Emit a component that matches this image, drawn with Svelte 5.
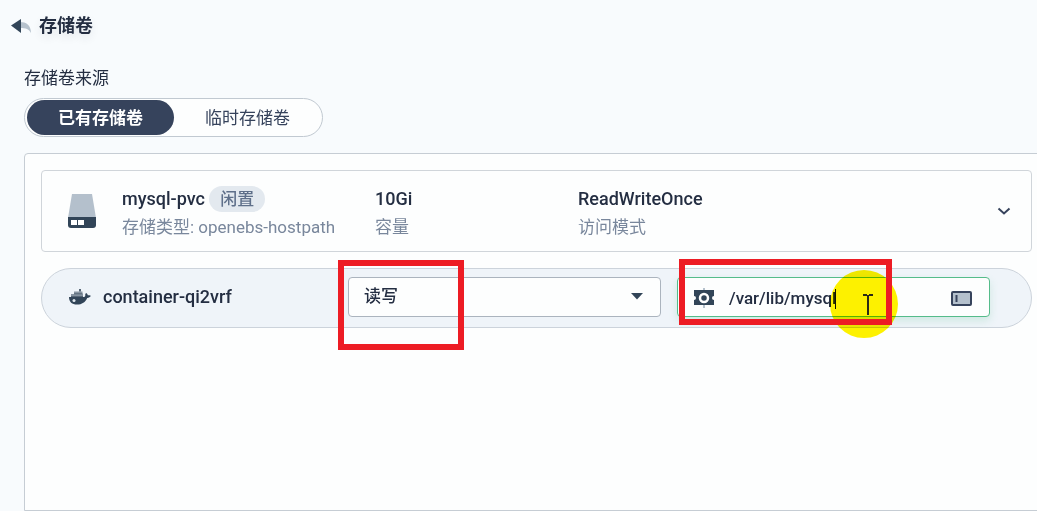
<script lang="ts">
	let source = $state('existing')
	let access = $state('rw')
	let mountPath = $state('/var/lib/mysql')

	const sources = [
		{ id: 'existing', label: '已有存储卷' },
		{ id: 'temp', label: '临时存储卷' }
	]
</script>

<main>
	<header>
		<button class="back" aria-label="返回">
			<svg width="20" height="16" viewBox="0 0 20 16">
				<path d="M9 4c6 0 11 3 11 11-2-4-5-5-11-5z" fill="#b6c2cd" />
				<path d="M0 7.500 10 1v14z" fill="#324558" />
			</svg>
		</button>
		<h1>存储卷</h1>
	</header>

	<section class="content">
		<p class="label" id="source-label">存储卷来源</p>
		<div class="tabs" role="group" aria-labelledby="source-label">
			{#each sources as item}
				<button
					class:active={source === item.id}
					aria-pressed={source === item.id}
					onclick={() => (source = item.id)}>{item.label}</button
				>
			{/each}
		</div>

		<div class="panel">
			<article class="volume">
				<svg class="disk" width="28" height="34" viewBox="0 0 28 34">
					<path d="M4 0h20l4 24H0z" fill="#b4c0cc" />
					<path d="M0 23h28v8a3 3 0 0 1-3 3H3a3 3 0 0 1-3-3z" fill="#324558" />
					<path d="M3 26h6v5H3zM10 26h6v5h-6z" fill="#fff" />
				</svg>
				<div>
					<div class="name">mysql-pvc <span class="badge">闲置</span></div>
					<div class="desc">存储类型: openebs-hostpath</div>
				</div>
				<div>
					<div class="name">10Gi</div>
					<div class="desc">容量</div>
				</div>
				<div>
					<div class="name">ReadWriteOnce</div>
					<div class="desc">访问模式</div>
				</div>
				<button class="toggle" aria-label="展开">
					<svg width="14" height="8" viewBox="0 0 14 8">
						<path d="M1.500 1.500 7 6.500l5.500-5" fill="none" stroke="#36435c" stroke-width="2" />
					</svg>
				</button>
			</article>

			<div class="mount">
				<div class="container-name">
					<svg width="22" height="16" viewBox="0 0 22 16">
						<path
							d="M0 8h15c1-.3 1.500-1 1.200-2.500.2-.8.600-1.200 1-1.500 1 .7 1.500 1.500 1.600 2.300 1 0 2.200 0 3 .5-.6 1.500-1.800 2.100-3.600 2.100C16.500 13 13 15.500 8 15.500 3 15.500 0 13 0 8z"
							fill="#324558"
						/>
						<path d="M2 5h12v2.500H2zM5 2.500h8.500V5H5z" fill="#8794a1" />
						<path d="M2 7.500h12M5 4.800h8.500" stroke="#566676" />
						<path d="M10 0h2v2.500h-2z" fill="#566676" />
						<circle cx="5" cy="11.500" r="1.500" fill="#dfe7ee" />
					</svg>
					<span>container-qi2vrf</span>
				</div>

				<div class="field">
					<select bind:value={access} aria-label="读写权限">
						<option value="rw">读写</option>
						<option value="ro">只读</option>
					</select>
					<svg class="arrow" width="12" height="7" viewBox="0 0 12 7">
						<path d="M0 0h12L6 6.500z" fill="#324558" />
					</svg>
					<span class="mark mark-select"></span>
				</div>

				<div class="field">
					<input type="text" bind:value={mountPath} aria-label="挂载路径" />
					<svg class="path-icon" width="20" height="20" viewBox="0 0 20 20">
						<path d="M10 0v20" stroke="#b6c2cd" stroke-width="2" />
						<path d="M0 2h20v6a2 2 0 0 0 0 4v5H0v-5a2 2 0 0 0 0-4z" fill="#324558" />
						<circle cx="10" cy="10" r="4" fill="#324558" stroke="#fff" stroke-width="2.500" />
					</svg>
					<span class="caret"></span>
					<svg class="sub-icon" width="21" height="15" viewBox="0 0 21 15">
						<rect x="1" y="1" width="19" height="13" rx="1" fill="#b4c0cc" stroke="#36435c" stroke-width="2" />
						<path d="M5.500 4v7" stroke="#36435c" stroke-width="2" />
					</svg>
					<span class="spot"></span>
					<svg class="cursor" width="10" height="22" viewBox="0 0 10 22">
						<path d="M0 1h4M6 1h4M5 1v20" fill="none" stroke="#2b2b16" stroke-width="2" />
					</svg>
					<span class="mark mark-path"></span>
				</div>
			</div>
		</div>
	</section>
</main>

<style>
	:global(body) {
		background: #f8fbfd;
		overflow: hidden;
	}
	main {
		min-height: 100vh;
		box-sizing: border-box;
		display: flex;
		flex-direction: column;
		color: #242e42;
		font: 17px/28px Roboto, 'Noto Sans CJK SC', sans-serif;
	}
	button,
	select,
	input {
		font: inherit;
		color: inherit;
	}
	button {
		padding: 0;
		border: 0;
		background: none;
		cursor: pointer;
	}
	header {
		display: flex;
		align-items: center;
		gap: 8px;
		padding: 12px 11px;
	}
	.back {
		display: flex;
	}
	h1 {
		margin: 0;
		font-size: 18px;
		line-height: 28px;
		font-weight: 700;
		text-shadow: 0 4px 8px rgba(36, 46, 66, 0.1);
	}
	.content {
		flex: 1;
		display: flex;
		flex-direction: column;
		margin: 0 -12px 0 24px;
		padding-top: 12px;
	}
	.label {
		margin: 0 0 6px;
	}
	.tabs {
		align-self: flex-start;
		display: flex;
		padding: 1px 1px 1px 2px;
		border: 1px solid #c1c9d1;
		border-radius: 20px;
		background: #fdfefe;
		margin-bottom: 16px;
	}
	.tabs button {
		width: 147px;
		height: 35px;
		border-radius: 18px;
		line-height: 34px;
		color: #36435c;
	}
	.tabs .active {
		background: #36435c;
		color: #fff;
		font-weight: 700;
	}
	.panel {
		flex: 1;
		padding: 16px;
		border: 1px solid #c6cdd4;
		border-radius: 4px 4px 0 0;
		background: #fdfefe;
	}
	.volume {
		display: grid;
		grid-template-columns: 28px 227px 177px 1fr auto;
		column-gap: 26px;
		align-items: center;
		padding: 10px 20px 10px 26px;
		border: 1px solid #d0d5da;
		border-radius: 4px;
		margin-bottom: 16px;
		background: #fdfefe;
	}
	.volume > div {
		padding-top: 4px;
	}
	.name {
		font-size: 18px;
		font-weight: 500;
	}
	.desc {
		color: #79879c;
	}
	.badge {
		display: inline-block;
		padding: 0 11px;
		font-size: 17px;
		line-height: 26px;
		border-radius: 13px;
		background: #e3e9ef;
		color: #5f708a;
	}
	.toggle {
		display: flex;
	}
	.mount {
		display: grid;
		grid-template-columns: 290px 1fr 1fr;
		column-gap: 16px;
		align-items: center;
		padding: 8px 41px 10px 0;
		border: 1px solid #ccd3db;
		border-radius: 30px;
		background: #eff4f9;
	}
	.container-name {
		display: flex;
		align-items: center;
		gap: 12px;
		padding-left: 27px;
		font-size: 18px;
		font-weight: 500;
	}
	.field {
		position: relative;
	}
	.field select,
	.field input {
		display: block;
		width: 100%;
		height: 40px;
		box-sizing: border-box;
		border-radius: 4px;
		background: #fdfefe;
		outline: 0;
	}
	.field select {
		appearance: none;
		padding: 0 40px 2px 15px;
		border: 1px solid #abb4be;
		font-weight: 500;
	}
	.field input {
		padding: 2px 50px 0 51px;
		border: 1px solid #55bc8a;
		box-shadow: 0 4px 8px rgba(85, 188, 138, 0.2);
		font-weight: 500;
	}
	.arrow,
	.path-icon,
	.sub-icon,
	.caret,
	.mark,
	.spot,
	.cursor {
		position: absolute;
		pointer-events: none;
	}
	.arrow {
		right: 18px;
		top: 16px;
	}
	.path-icon {
		left: 17px;
		top: 11px;
	}
	.sub-icon {
		right: 18px;
		top: 14px;
	}
	.caret {
		left: 158px;
		top: 12px;
		width: 1px;
		height: 20px;
		background: #111;
	}
	.spot {
		left: 153px;
		top: -7px;
		width: 68px;
		height: 68px;
		border-radius: 50%;
		background: #fff200;
		mix-blend-mode: multiply;
	}
	.cursor {
		left: 186px;
		top: 17px;
	}
	.mark {
		box-sizing: border-box;
		border: 6px solid #ed1c24;
	}
	.mark-select {
		left: -10px;
		top: -17px;
		width: 126px;
		height: 90px;
	}
	.mark-path {
		left: 2px;
		top: -18px;
		width: 213px;
		height: 66px;
	}
</style>
